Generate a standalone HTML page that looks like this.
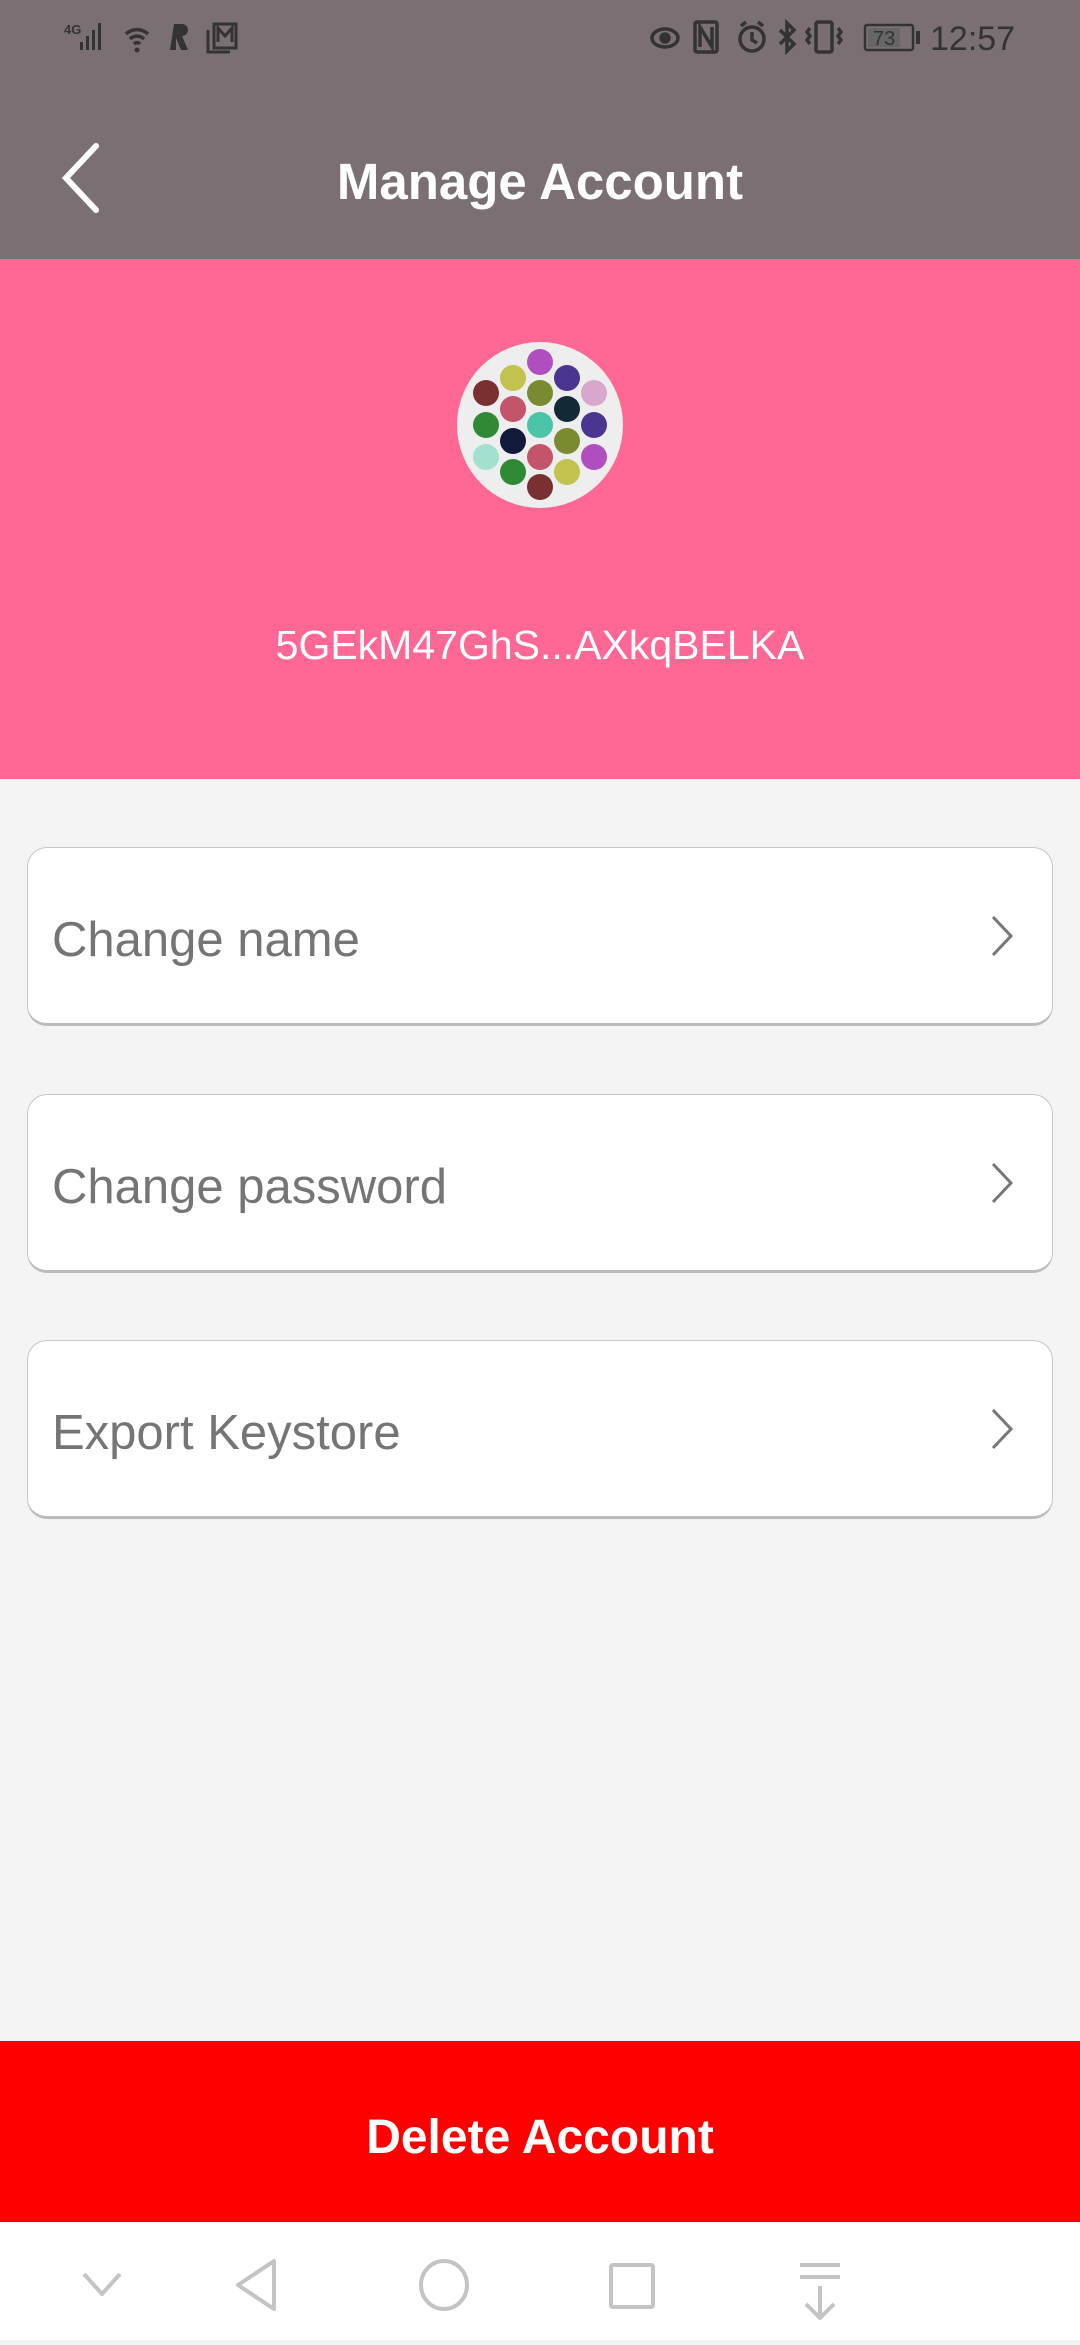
<!DOCTYPE html>
<html><head><meta charset="utf-8"><style>
*{margin:0;padding:0;box-sizing:border-box}
body{width:1080px;height:2340px;background:#f4f4f4;font-family:"Liberation Sans",sans-serif;position:relative;overflow:hidden}
.hdr{position:absolute;left:0;top:0;width:1080px;height:259px;background:#7a7073}
.title{position:absolute;top:152px;left:0;width:1080px;text-align:center;color:#fff;font-weight:bold;font-size:51px}
.pink{position:absolute;top:259px;left:0;width:1080px;height:520px;background:#ff6795}
.addr{position:absolute;top:622px;left:0;width:1080px;text-align:center;color:#fff;font-size:41px}
.card{position:absolute;left:27px;width:1026px;height:179px;background:#fff;border:1.5px solid #c8c8c8;border-bottom:3px solid #bcbcbc;border-radius:20px}
.card span{position:absolute;left:24px;top:64px;font-size:49px;color:#757575}
.card svg{position:absolute;right:38px;top:66px}
.del{position:absolute;left:0;top:2041px;width:1080px;height:181px;background:#fe0000;color:#fff;font-weight:bold;font-size:48px;text-align:center;line-height:181px;padding-top:6px}
.nav{position:absolute;left:0;top:2222px;width:1080px;height:118px;background:#fff}
.st{position:absolute;top:20px;color:#333;font-size:32px}
</style></head><body>
<div class="hdr">
<svg style="position:absolute;left:64px;top:18px" width="180" height="38" viewBox="0 0 180 38" fill="#333">
<text x="0" y="16" font-size="13" font-weight="bold" font-family="Liberation Sans">4G</text>
<rect x="16" y="24" width="3" height="8"/><rect x="22" y="18" width="3" height="14"/><rect x="28" y="12" width="3" height="20"/><rect x="34" y="5" width="3" height="27"/>
<path d="M62 16a16 16 0 0 1 22 0M66 21a10 10 0 0 1 14 0M70 26a4 4 0 0 1 6 0" stroke="#333" stroke-width="3.5" fill="none"/><circle cx="73" cy="32" r="2.5"/>
<path d="M110 6h8a6 6 0 0 1 0 12l6 14h-7l-5-12v12h-6z"/>
<rect x="150" y="6" width="22" height="24" fill="none" stroke="#333" stroke-width="3"/><path d="M144 12v22h22" stroke="#333" stroke-width="3" fill="none"/><path d="M154 24v-14l7 8 7-8v14" stroke="#333" stroke-width="3" fill="none"/>
</svg>
<svg style="position:absolute;left:648px;top:18px" width="280" height="38" viewBox="0 0 280 38" fill="none" stroke="#333" stroke-width="3.5">
<ellipse cx="17" cy="20" rx="13" ry="9"/><circle cx="17" cy="20" r="4" fill="#333"/>
<rect x="47" y="4" width="22" height="30" rx="2"/><path d="M52 29V9l12 20V9"/>
<circle cx="104" cy="21" r="12"/><path d="M104 14v8l5 3M93 8l5-4M115 8l-5-4"/>
<path d="M132 12l14 14-7 7V5l7 7-14 14"/>
<rect x="168" y="4" width="16" height="30" rx="2"/><path d="M162 10l-3 4 3 4-3 4 3 4M190 10l3 4-3 4 3 4-3 4"/>
<rect x="217" y="7" width="48" height="25" rx="2" stroke-width="2.5"/><rect x="220" y="10" width="32" height="19" fill="#666" stroke="none"/><rect x="268" y="13" width="4" height="13" fill="#333" stroke="none"/>
<text x="225" y="27" font-size="20" fill="#333" stroke="none" font-family="Liberation Sans">73</text>
</svg>
<div class="st" style="left:930px;font-size:34px">12:57</div>
<svg style="position:absolute;left:58px;top:142px" width="48" height="72" viewBox="0 0 48 72"><path d="M38 4L8 36l30 32" stroke="#fff" stroke-width="6" fill="none" stroke-linecap="round"/></svg>
<div class="title">Manage Account</div>
</div>
<div class="pink">
<svg style="position:absolute;left:456px;top:82px" width="168" height="168" viewBox="456 341 168 168">
<circle cx="540" cy="425" r="83" fill="#eeeeee"/>
<g>
<circle cx="486" cy="393" r="13" fill="#7a3030"/><circle cx="486" cy="425" r="13" fill="#2e8a35"/><circle cx="486" cy="457" r="13" fill="#a3e0d0"/>
<circle cx="513" cy="378" r="13" fill="#c2c24e"/><circle cx="513" cy="409" r="13" fill="#c4546a"/><circle cx="513" cy="441" r="13" fill="#111a3a"/><circle cx="513" cy="472" r="13" fill="#2e8a35"/>
<circle cx="540" cy="362" r="13" fill="#b04ec0"/><circle cx="540" cy="393" r="13" fill="#7a8a30"/><circle cx="540" cy="425" r="13" fill="#4cc4a8"/><circle cx="540" cy="457" r="13" fill="#c4546a"/><circle cx="540" cy="487" r="13" fill="#7a3030"/>
<circle cx="567" cy="378" r="13" fill="#4a3590"/><circle cx="567" cy="409" r="13" fill="#112a35"/><circle cx="567" cy="441" r="13" fill="#7a8a30"/><circle cx="567" cy="472" r="13" fill="#c2c24e"/>
<circle cx="594" cy="393" r="13" fill="#d8a8cc"/><circle cx="594" cy="425" r="13" fill="#4a3590"/><circle cx="594" cy="457" r="13" fill="#b04ec0"/>
</g></svg>
</div>
<div class="addr">5GEkM47GhS...AXkqBELKA</div>
<div class="card" style="top:847px"><span>Change name</span><svg width="24" height="44" viewBox="0 0 24 44"><path d="M3 3l18 19L3 41" stroke="#777" stroke-width="3" fill="none"/></svg></div>
<div class="card" style="top:1094px"><span>Change password</span><svg width="24" height="44" viewBox="0 0 24 44"><path d="M3 3l18 19L3 41" stroke="#777" stroke-width="3" fill="none"/></svg></div>
<div class="card" style="top:1340px"><span>Export Keystore</span><svg width="24" height="44" viewBox="0 0 24 44"><path d="M3 3l18 19L3 41" stroke="#777" stroke-width="3" fill="none"/></svg></div>
<div class="del">Delete Account</div>
<div class="nav">
<svg width="1080" height="118" viewBox="0 2218 1080 118" fill="none" stroke="#c4c4c4" stroke-width="4" stroke-linejoin="round">
<path d="M84 2270l18 20 18-20"/>
<path d="M274 2257v48l-36-24z"/>
<ellipse cx="444" cy="2281" rx="23" ry="24"/>
<rect x="611" y="2261" width="42" height="42" rx="2"/>
<path d="M800 2261h40M800 2273h40M820 2282v32M806 2300l14 14 14-14"/>
</svg>
</div>
</body></html>
